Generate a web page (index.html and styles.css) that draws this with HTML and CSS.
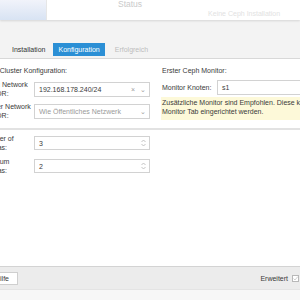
FILE: index.html
```html
<!DOCTYPE html>
<html lang="de">
<head>
    <meta charset="UTF-8">
    <meta name="viewport" content="width=device-width, initial-scale=1.0">
    <title>Ceph Konfiguration</title>
    <link rel="stylesheet" href="styles.css">
</head>
<body>

<div class="topbar">
    <div class="nav-tree"></div>
    <div class="nav-main">
        <span class="status-tab">Status</span>
        <div class="nav-info">
            <div class="nav-info-top"><span>Dienst</span><span>Zustand</span></div>
            <div class="nav-info-bottom">Keine Ceph Installation</div>
        </div>
    </div>
</div>

<div class="tabbar">
    <span class="tab done">Installation</span>
    <span class="tab active">Konfiguration</span>
    <span class="tab disabled">Erfolgreich</span>
</div>

<div class="content">
    <div class="columns">
        <div class="col">
            <div class="heading">Ceph Cluster Konfiguration:</div>
            <div class="row first">
                <label>Public Network IP/CIDR:</label>
                <div class="input">
                    <span class="value">192.168.178.240/24</span>
                    <span class="trigger">&times;</span>
                    <span class="trigger">&#8964;</span>
                </div>
            </div>
            <div class="row">
                <label>Cluster Network IP/CIDR:</label>
                <div class="input">
                    <span class="value placeholder">Wie Öffentliches Netzwerk</span>
                    <span class="trigger">&#8964;</span>
                </div>
            </div>
        </div>
        <div class="col right">
            <div class="heading">Erster Ceph Monitor:</div>
            <div class="row monitor">
                <label>Monitor Knoten:</label>
                <div class="input"><span class="value">s1</span></div>
            </div>
            <div class="hint">
                Zusätzliche Monitor sind Empfohlen. Diese können im<br>
                Monitor Tab eingerichtet werden.
            </div>
        </div>
    </div>

    <div class="advanced">
        <div class="col">
            <div class="row number">
                <label>Number of replicas:</label>
                <div class="input">
                    <span class="value">3</span>
                    <svg class="spinner" width="5" height="8" viewBox="0 0 5 8"><path d="M0.5 3 L2.5 1 L4.5 3 M0.5 5 L2.5 7 L4.5 5" fill="none" stroke="#b5b5b5" stroke-width="0.8"/></svg>
                </div>
            </div>
            <div class="row number">
                <label>Minimum replicas:</label>
                <div class="input">
                    <span class="value">2</span>
                    <svg class="spinner" width="5" height="8" viewBox="0 0 5 8"><path d="M0.5 3 L2.5 1 L4.5 3 M0.5 5 L2.5 7 L4.5 5" fill="none" stroke="#b5b5b5" stroke-width="0.8"/></svg>
                </div>
            </div>
        </div>
    </div>
</div>

<div class="toolbar">
    <span class="button">
        <svg width="7" height="7" viewBox="0 0 7 7"><circle cx="3.5" cy="3.5" r="3" fill="none" stroke="#555" stroke-width="0.8"/></svg>
        Hilfe
    </span>
    <span class="advanced-toggle">
        Erweitert
        <svg class="checkbox" width="7" height="7" viewBox="0 0 7 7"><rect x="0.5" y="0.5" width="6" height="6" fill="#fff" stroke="#b8b8b8"/><path d="M1.5 3.5 L3 5 L5.8 1.6" fill="none" stroke="#c4c4c4" stroke-width="0.8"/></svg>
    </span>
</div>

<div class="footer-strip"></div>

</body>
</html>
```

FILE: styles.css
```css
body {
    margin: 0;
    width: 300px;
    height: 300px;
    overflow: hidden;
    display: flex;
    flex-direction: column;
    background-color: #fff;
    color: #3a3a3a;
    font-family: "Liberation Sans", Arial, sans-serif;
    font-size: 7px;
}

/* header of the main panel, mostly hidden behind the wizard */
.topbar {
    height: 20px;
    flex-shrink: 0;
    display: flex;
    position: relative;
    z-index: 1;
    box-shadow: 0 1px 2px rgba(0, 0, 0, 0.12);
}

.nav-tree {
    width: 46px;
    background: linear-gradient(#f1f3fa, #d8e3f3);
}

.nav-main {
    flex: 1;
    display: flex;
    background-color: #fff;
    border-left: 1px solid #e6e6e6;
}

.status-tab {
    margin-left: 71px;
    font-size: 8.5px;
    line-height: 9px;
    color: #cacaca;
}

.nav-info {
    margin-left: 66px;
    margin-top: -6px;
}

.nav-info-top span {
    color: #b9b9b9;
    margin-right: 16px;
}

.nav-info-bottom {
    margin-top: 9px;
    color: #e2e2e2;
}

/* wizard tabs */
.tabbar {
    height: 39px;
    flex-shrink: 0;
    box-sizing: border-box;
    display: flex;
    gap: 5px;
    padding: 23px 0 2px 7px;
    background-color: #f3f3f3;
    border-bottom: 1px solid #d8d8d8;
}

.tab {
    height: 13px;
    line-height: 13px;
    padding: 0 5px;
}

.tab.done {
    color: #333;
    padding-right: 3px;
}

.tab.active {
    background-color: #2b8fd5;
    color: #fff;
}

.tab.disabled {
    color: #bdbdbd;
}

/* form */
.content {
    flex: 1;
    padding-top: 7px;
}

.columns {
    display: flex;
    gap: 11px;
    margin-left: -19px;
}

.col {
    width: 169px;
    flex-shrink: 0;
}

.heading {
    height: 9px;
    line-height: 9px;
}

.right .heading,
.right label {
    padding-left: 1px;
}

.row {
    display: flex;
    align-items: center;
    margin-top: 4px;
}

.row.first {
    margin-top: 5px;
}

.row label {
    width: 52px;
    margin-right: 1px;
    flex-shrink: 0;
    line-height: 9px;
}

.right .row label {
    width: 54px;
}

.input {
    flex: 1;
    height: 15px;
    box-sizing: border-box;
    display: flex;
    align-items: center;
    padding: 0 3px 0 4px;
    border: 1px solid #d2d2d2;
    background-color: #fff;
}

.value {
    flex: 1;
    white-space: nowrap;
}

.placeholder {
    color: #9a9a9a;
}

.trigger {
    color: #9d9d9d;
    margin-left: 5px;
    line-height: 9px;
}

.row.monitor {
    margin-top: 5px;
}

.hint {
    margin-top: 2px;
    padding: 2px 1px 4px 1px;
    line-height: 8.5px;
    white-space: nowrap;
    background-color: #fdf9d9;
}

.advanced {
    margin-top: 8px;
    margin-left: -19px;
    padding-top: 4px;
    border-top: 2px solid #e2e2e2;
}

.row.number {
    margin-top: 0;
    margin-bottom: 5px;
}

.row.number .input {
    height: 14px;
}

.spinner {
    display: block;
}

/* bottom toolbar */
.toolbar {
    height: 23px;
    flex-shrink: 0;
    box-sizing: border-box;
    display: flex;
    align-items: center;
    justify-content: space-between;
    background-color: #ececec;
    border-top: 1px solid #d3d3d3;
}

.button {
    height: 13px;
    box-sizing: border-box;
    display: flex;
    align-items: center;
    gap: 3px;
    margin-left: -20px;
    padding: 0 8px 0 4px;
    background-color: #fff;
    border: 1px solid #cfcfcf;
}

.advanced-toggle {
    display: flex;
    align-items: center;
    gap: 4px;
    margin-right: 1px;
}

.footer-strip {
    height: 10px;
    flex-shrink: 0;
    background-color: #f7f7f7;
    border-top: 1px solid #e4e4e4;
}
```
